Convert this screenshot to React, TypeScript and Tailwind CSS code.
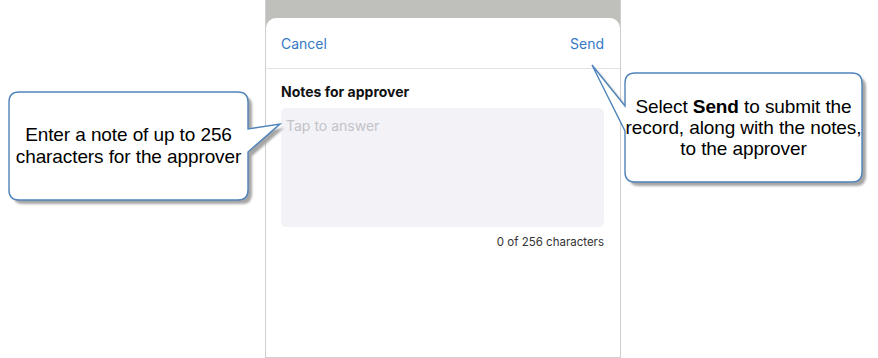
export default function App() {
  return (
    <div className="relative w-[878px] h-[358px] bg-white overflow-hidden">
      <div className="ml-[265px] w-[356px] h-[358px] flex flex-col bg-[#bfc0bc] border-x border-b border-[#cfcfcf]">
        <div className="h-[18px] shrink-0" />
        <div
          className="flex-1 flex flex-col bg-white rounded-t-[10px]"
          style={{ fontFamily: "Inter, 'Noto Sans', sans-serif" }}
        >
          <div className="h-[51px] shrink-0 flex items-center justify-between pl-[15px] pr-4 border-b border-[#e3e3e6] text-[14px] text-[#3478c6]">
            <span>Cancel</span>
            <span>Send</span>
          </div>
          <div className="flex flex-col pl-[15px] pr-4 pt-[15px]">
            <div className="text-[14px] leading-4 font-bold text-[#111]">Notes for approver</div>
            <div className="mt-2 h-[119px] rounded-[5px] bg-[#f2f2f7] px-[5px] pt-[10px] text-[14px] leading-4 text-[#c3c3c8]">
              Tap to answer
            </div>
            <div className="mt-[7px] text-right text-[11.5px] leading-4 text-[#333]">0 of 256 characters</div>
          </div>
        </div>
      </div>

      <svg className="absolute left-0 top-0 pointer-events-none" width="878" height="358" viewBox="0 0 878 358">
        <defs>
          <filter id="sh" x="-10%" y="-10%" width="120%" height="120%">
            <feGaussianBlur stdDeviation="0.8" />
          </filter>
        </defs>
        <g transform="translate(4,4)" fill="#a6a6a6" filter="url(#sh)">
          <path d="M19,92 H238 Q248,92 248,102 V129 L280,124 L248,152 V190 Q248,200 238,200 H19 Q9,200 9,190 V102 Q9,92 19,92 Z" />
          <path d="M635,73 H852 Q862,73 862,83 V172 Q862,182 852,182 H635 Q625,182 625,172 V131 L592,65 L625,106 V83 Q625,73 635,73 Z" />
        </g>
        <g fill="#ffffff" stroke="#4f84ba" strokeWidth="1.4">
          <path d="M19,92 H238 Q248,92 248,102 V129 L280,124 L248,152 V190 Q248,200 238,200 H19 Q9,200 9,190 V102 Q9,92 19,92 Z" />
          <path d="M635,73 H852 Q862,73 862,83 V172 Q862,182 852,182 H635 Q625,182 625,172 V131 L592,65 L625,106 V83 Q625,73 635,73 Z" />
        </g>
      </svg>

      <div
        className="absolute left-[9px] top-[92px] w-[239px] h-[108px] flex items-center justify-center text-center text-[19px] leading-[22px] tracking-[-0.1px] text-black"
        style={{ fontFamily: "'Liberation Sans', Arial, sans-serif" }}
      >
        <div>
          Enter a note of up to 256
          <br />
          characters for the approver
        </div>
      </div>
      <div
        className="absolute left-[625px] top-[73px] w-[237px] h-[109px] flex items-center justify-center text-center text-[19px] leading-[21px] tracking-[-0.1px] text-black"
        style={{ fontFamily: "'Liberation Sans', Arial, sans-serif" }}
      >
        <div className="whitespace-nowrap">
          Select <b>Send</b> to submit the
          <br />
          record, along with the notes,
          <br />
          to the approver
        </div>
      </div>
    </div>
  );
}
